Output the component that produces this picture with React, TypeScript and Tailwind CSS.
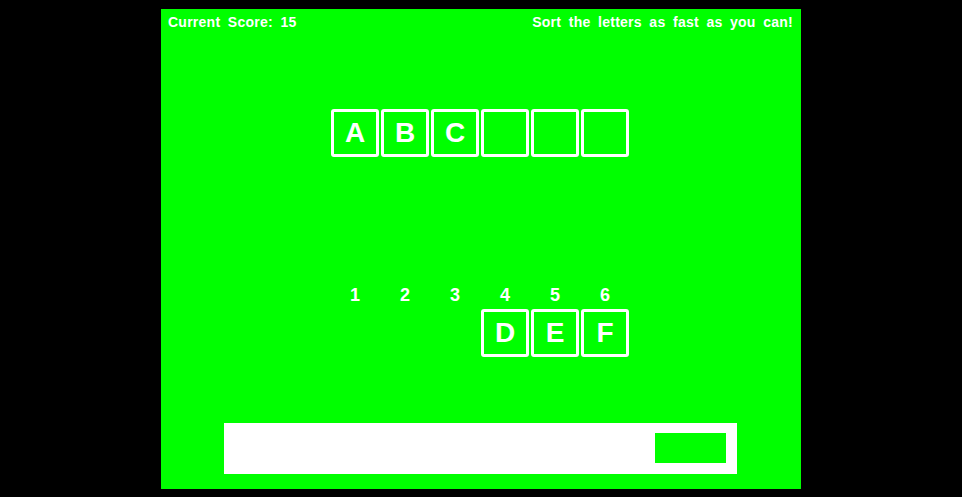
const TOP = ["A", "B", "C", "", "", ""];
const BOTTOM = ["", "", "", "D", "E", "F"];

function Tile({ letter, empty }: { letter?: string; empty?: boolean }) {
  if (empty) return <div className="w-12 h-12" />;
  return (
    <div className="w-12 h-12 border-[3px] border-white rounded-[3px] flex items-center justify-center text-white text-[28px] font-bold leading-none">
      {letter}
    </div>
  );
}

export default function App() {
  return (
    <div
      className="h-screen w-full bg-black flex items-center justify-center"
      style={{ fontFamily: '"Liberation Sans", Arial, sans-serif' }}
    >
      <div className="w-[640px] h-[480px] bg-[#00ff00] flex flex-col">
        {/* Header */}
        <div className="flex justify-between pl-[7px] pr-[8px] pt-[4px] text-white text-[14px] leading-[18px] font-bold tracking-[0.25px] [word-spacing:3.4px]">
          <span>Current Score: 15</span>
          <span>Sort the letters as fast as you can!</span>
        </div>

        {/* Answer slots */}
        <div className="mt-[78px] pr-[2px] flex justify-center gap-[2px]">
          {TOP.map((l, i) => (
            <Tile key={i} letter={l} />
          ))}
        </div>

        {/* Positions */}
        <div className="mt-[128px] pr-[2px] flex justify-center gap-[2px] text-white text-[18px] leading-[20px] font-bold">
          {[1, 2, 3, 4, 5, 6].map((n) => (
            <div key={n} className="w-12 text-center">
              {n}
            </div>
          ))}
        </div>

        {/* Remaining letters */}
        <div className="mt-[4px] pr-[2px] flex justify-center gap-[2px]">
          {BOTTOM.map((l, i) => (
            <Tile key={i} letter={l} empty={!l} />
          ))}
        </div>

        {/* Timer bar */}
        <div className="mt-[66px] ml-[63px] w-[513px] h-[51px] bg-white flex items-center justify-end pr-[11px]">
          <div className="w-[71px] h-[30px] bg-[#00ff00]" />
        </div>
      </div>
    </div>
  );
}
